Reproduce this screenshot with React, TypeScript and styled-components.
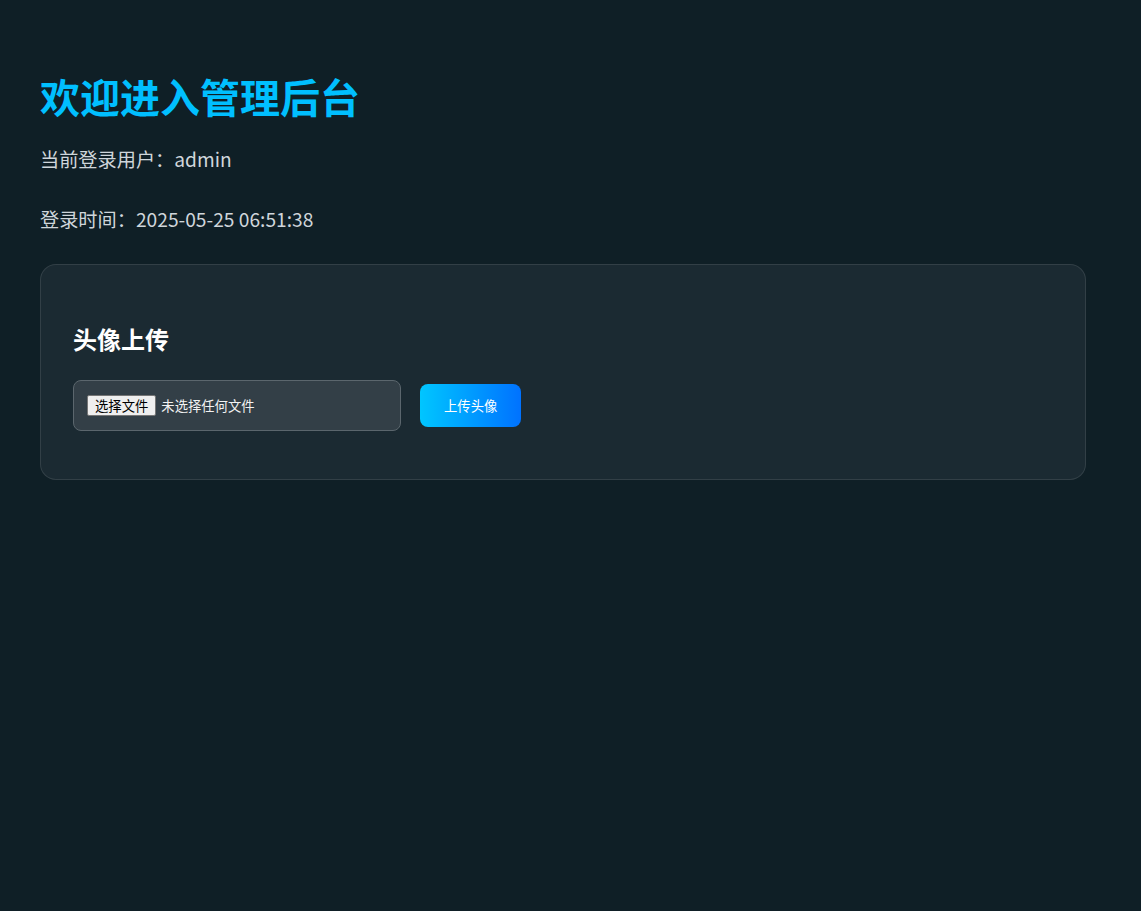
import React, { useState } from "react";
import styled, { createGlobalStyle } from "styled-components";

const GlobalStyle = createGlobalStyle`
	html, body {
		margin: 0;
	}
	body {
		padding: 40px 55px 40px 40px;
		min-height: 100vh;
		background-color: #0f1f26;
		color: #cfd6db;
		font-family: "Noto Sans CJK SC", "Noto Sans", sans-serif;
	}
`;

const Title = styled.h1`
	font-size: 40px;
	font-weight: 700;
	color: #00bfff;
	margin: 27px 0 20px;
	line-height: normal;
`;

const Info = styled.p`
	font-size: 19.2px;
	line-height: 29px;
	margin: 0 0 30.5px;
	color: #cfd6db;
`;

const Card = styled.section`
	background-color: #1b2a32;
	border: 1px solid rgba(255, 255, 255, 0.1);
	border-radius: 16px;
	padding: 56px 32px 48px;
`;

const CardTitle = styled.h3`
	font-size: 24px;
	font-weight: 700;
	color: #ffffff;
	margin: 0 0 24px;
	line-height: normal;
`;

const UploadRow = styled.div`
	display: flex;
	align-items: center;
	gap: 19px;
`;

const FileBox = styled.label`
	box-sizing: border-box;
	width: 328px;
	height: 51px;
	display: flex;
	align-items: center;
	gap: 5px;
	padding: 0 13px;
	background-color: #333f47;
	border: 1px solid #5b666d;
	border-radius: 8px;
	cursor: pointer;

	input {
		display: none;
	}
`;

const PickButton = styled.span`
	box-sizing: border-box;
	height: 21px;
	display: inline-flex;
	align-items: center;
	padding: 0 7px;
	background-color: #efefef;
	border: 1px solid #767676;
	border-radius: 2px;
	color: #000;
	font-size: 13.33px;
`;

const FileName = styled.span`
	color: #f2f2f2;
	font-size: 13.33px;
`;

const UploadButton = styled.button`
	height: 43px;
	padding: 0 24px;
	border: none;
	border-radius: 8px;
	background: linear-gradient(90deg, #00c6ff, #0072ff);
	color: #ffffff;
	font-family: "Noto Sans CJK SC", sans-serif;
	font-size: 13.33px;
	cursor: pointer;
`;

function App() {
	const [fileName, setFileName] = useState("");

	return (
		<>
			<GlobalStyle />
			<Title>欢迎进入管理后台</Title>
			<Info>当前登录用户：admin</Info>
			<Info>登录时间：2025-05-25 06:51:38</Info>
			<Card>
				<CardTitle>头像上传</CardTitle>
				<UploadRow>
					<FileBox>
						<input
							type="file"
							accept="image/*"
							onChange={(e) => setFileName(e.target.files?.[0]?.name ?? "")}
						/>
						<PickButton>选择文件</PickButton>
						<FileName>{fileName || "未选择任何文件"}</FileName>
					</FileBox>
					<UploadButton>上传头像</UploadButton>
				</UploadRow>
			</Card>
		</>
	);
}

export default App;
